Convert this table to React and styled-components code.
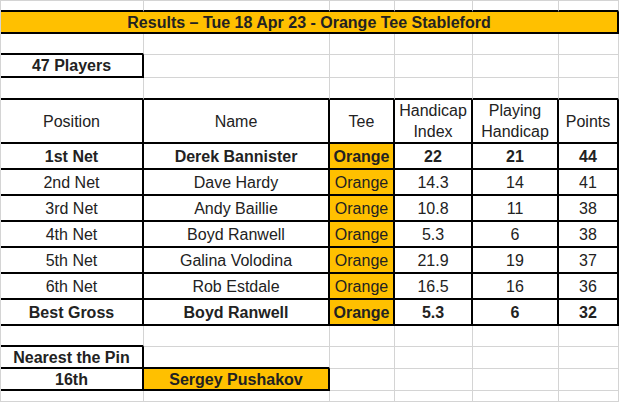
import React from 'react';
import styled, { createGlobalStyle } from 'styled-components';

const GlobalStyle = createGlobalStyle`
  html, body {
    margin: 0;
    padding: 0;
    background: #ffffff;
  }
  body {
    font-family: "Liberation Sans", Arial, sans-serif;
  }
`;

const COLS = [143, 186, 65, 78, 86, 60];
const ROWS = [11, 22, 21, 23, 22, 44, 26, 26, 26, 26, 26, 26, 26, 21, 22, 22, 11];

const results = [
  ['1st Net', 'Derek Bannister', 'Orange', '22', '21', '44', true],
  ['2nd Net', 'Dave Hardy', 'Orange', '14.3', '14', '41'],
  ['3rd Net', 'Andy Baillie', 'Orange', '10.8', '11', '38'],
  ['4th Net', 'Boyd Ranwell', 'Orange', '5.3', '6', '38'],
  ['5th Net', 'Galina Volodina', 'Orange', '21.9', '19', '37'],
  ['6th Net', 'Rob Estdale', 'Orange', '16.5', '16', '36'],
  ['Best Gross', 'Boyd Ranwell', 'Orange', '5.3', '6', '32', true],
];

const headers = ['Position', 'Name', 'Tee', 'Handicap\nIndex', 'Playing\nHandicap', 'Points'];

const Sheet = styled.div`
  display: grid;
  grid-template-columns: ${COLS.map(c => `${c}px`).join(' ')};
  grid-template-rows: ${ROWS.map(r => `${r}px`).join(' ')};
  width: 619px;
  height: 402px;
  box-sizing: border-box;
  border-top: 1px solid #d4d4d4;
  border-left: 1px solid #d4d4d4;
  overflow: hidden;
  color: #222222;
  font-size: 16px;
`;

const Cell = styled.div`
  box-sizing: border-box;
  display: flex;
  align-items: center;
  justify-content: center;
  text-align: center;
  white-space: pre-line;
  line-height: 21px;
  overflow: hidden;
  grid-column: ${p => (p.$span ? `span ${p.$span}` : 'auto')};
  border-right: ${p => (p.$r ? '2px solid #000' : '1px solid #d4d4d4')};
  border-bottom: ${p => (p.$b ? '2px solid #000' : '1px solid #d4d4d4')};
  background: ${p => (p.$fill ? '#ffc000' : '#ffffff')};
  font-weight: ${p => (p.$bold ? 700 : 400)};
`;

const blanks = (n, key, props = {}) =>
  Array.from({ length: n }, (_, i) => <Cell key={`${key}-${i}`} {...props} />);

const App = () => {
  return (
    <>
      <GlobalStyle />
      <Sheet>
        {/* row 1 - top edge of title */}
        {blanks(6, 'r1', { $b: true })}

        {/* title */}
        <Cell $span={6} $r $b $fill $bold>
          Results – Tue 18 Apr 23 - Orange Tee Stableford
        </Cell>

        {/* players count */}
        <Cell $b />
        {blanks(5, 'r3')}
        <Cell $r $b $bold>47 Players</Cell>
        {blanks(5, 'r4')}

        {/* results table */}
        {blanks(6, 'r5', { $b: true })}
        {headers.map(h => (
          <Cell key={h} $r $b>{h}</Cell>
        ))}
        {results.map(row =>
          row.slice(0, 6).map((val, i) => (
            <Cell key={`${row[0]}-${i}`} $r $b $fill={i === 2} $bold={row[6]}>
              {val}
            </Cell>
          )),
        )}

        {/* nearest the pin */}
        <Cell $b />
        {blanks(5, 'r14')}
        <Cell $r $b $bold>Nearest the Pin</Cell>
        <Cell $b />
        {blanks(4, 'r15')}
        <Cell $r $b $bold>16th</Cell>
        <Cell $r $b $fill $bold>Sergey Pushakov</Cell>
        {blanks(4, 'r16')}

        {blanks(6, 'r17')}
      </Sheet>
    </>
  );
};

export default App;
